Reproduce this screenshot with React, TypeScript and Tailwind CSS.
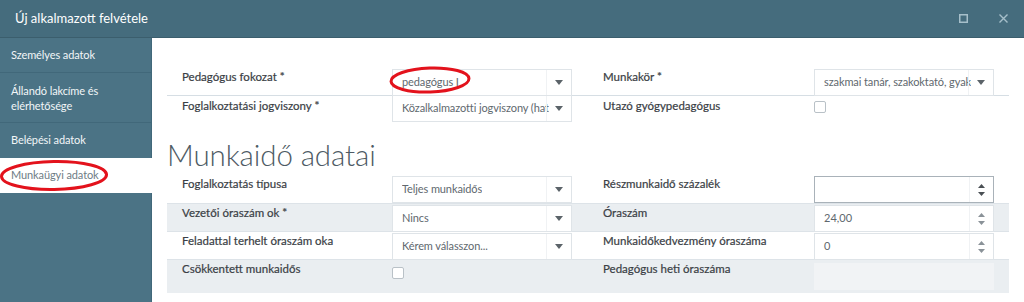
import React from "react";

const Caret = () => (
  <svg width="8" height="5" viewBox="0 0 8 5" className="block">
    <path d="M0 0 L8 0 L4 5 Z" fill="#5b6369" />
  </svg>
);

const Spinner = ({ dark }: { dark?: boolean }) => (
  <div className="flex flex-col items-center gap-[4px]">
    <svg width="7" height="4" viewBox="0 0 7 4" className="block">
      <path d="M0 4 L7 4 L3.5 0 Z" fill={dark ? "#4a4f54" : "#8a9298"} />
    </svg>
    <svg width="7" height="4" viewBox="0 0 7 4" className="block">
      <path d="M0 0 L7 0 L3.5 4 Z" fill={dark ? "#4a4f54" : "#8a9298"} />
    </svg>
  </div>
);

const Select = ({ value, cls = "" }: { value: string; cls?: string }) => (
  <div className={`relative w-[180px] h-[27px] border border-[#dfe4e8] bg-white ${cls}`}>
    <div className="absolute inset-0 pl-[9px] pr-[22px] flex items-center overflow-hidden whitespace-nowrap text-[11px] tracking-[-0.1px] text-[#60686e]">
      <span className="overflow-hidden">{value}</span>
    </div>
    <div className="absolute right-0 top-0 bottom-0 w-[25px] border-l border-[#f0f2f4] flex items-center justify-center">
      <Caret />
    </div>
  </div>
);

const NumInput = ({ value, dark, cls = "" }: { value: string; dark?: boolean; cls?: string }) => (
  <div
    className={`w-[180px] h-[27px] border ${dark ? "border-[#a9b2b9]" : "border-[#dfe4e8]"} bg-white flex items-stretch ${cls}`}
  >
    <div className="flex-1 pl-[9px] flex items-center text-[11px] text-[#60686e]">{value}</div>
    <div className="w-[24px] border-l border-[#f0f2f4] flex items-center justify-center">
      <Spinner dark={dark} />
    </div>
  </div>
);

const Check = () => (
  <div className="w-[12px] h-[12px] border border-[#b9c1c7] rounded-[2px] bg-white" />
);

const Label1 = ({ children }: { children: React.ReactNode }) => (
  <div className="w-[225px] pl-[15px] pt-[1px] text-[11.5px] leading-[14px] font-normal text-[#3a4045] whitespace-nowrap [-webkit-text-stroke:0.2px_#3a4045]">
    {children}
  </div>
);
const Label2 = ({ children }: { children: React.ReactNode }) => (
  <div className="w-[242px] pl-[31px] pt-[1px] text-[11.5px] leading-[14px] font-normal text-[#3a4045] whitespace-nowrap [-webkit-text-stroke:0.2px_#3a4045]">
    {children}
  </div>
);

export default function App() {
  return (
    <div
      className="relative w-[1024px] h-[302px] overflow-hidden bg-white"
      style={{ fontFamily: "Lato, 'Open Sans', sans-serif" }}
    >
      {/* header */}
      <div className="h-[38px] bg-[#456c7d] border-b border-[#3b5e6d] flex items-center pl-[15px] pr-[16px]">
        <div className="text-[13px] text-white">Új alkalmazott felvétele</div>
        <div className="ml-auto flex items-center gap-[31px]">
          <svg width="9" height="9" viewBox="0 0 9 9" className="block">
            <rect x="0.75" y="0.75" width="7.5" height="7.5" fill="none" stroke="#a6bfca" strokeWidth="1.5" />
          </svg>
          <svg width="9" height="9" viewBox="0 0 9 9" className="block">
            <path d="M0.5 0.5 L8.5 8.5 M8.5 0.5 L0.5 8.5" stroke="#a6bfca" strokeWidth="1.4" />
          </svg>
        </div>
      </div>

      <div className="flex h-[264px]">
        {/* sidebar */}
        <div className="w-[152px] bg-[#4b7385] border-r border-[#41687a] flex flex-col text-[11px] tracking-[-0.1px] text-[#f2f6f8]">
          <div className="h-[35px] pl-[11px] flex items-center border-b border-[#41687a]">Személyes adatok</div>
          <div className="h-[50px] pl-[11px] flex items-center border-b border-[#41687a] leading-[15px]">
            Állandó lakcíme és
            <br />
            elérhetősége
          </div>
          <div className="h-[35px] pl-[11px] flex items-center">Belépési adatok</div>
          <div className="h-[35px] pl-[11px] flex items-center bg-white text-[#6e7c85] -mr-px">Munkaügyi adatok</div>
        </div>

        {/* content */}
        <div className="flex-1 pl-[15px] pr-[15px] pt-[31px]">
          <div className="flex h-[27px] border-b border-[#d6dee4]">
            <Label1>Pedagógus fokozat *</Label1>
            <Select value="pedagógus I" />
            <Label2>Munkakör *</Label2>
            <Select value="szakmai tanár, szakoktató, gyakorlati oktató" />
          </div>
          <div className="flex h-[27px]">
            <Label1>
              <div className="pt-[2px]">Foglalkoztatási jogviszony *</div>
            </Label1>
            <Select value="Közalkalmazotti jogviszony (határozatlan idejű)" cls="-mt-px" />
            <Label2>
              <div className="pt-[2px]">Utazó gyógypedagógus</div>
            </Label2>
            <div className="pt-[5px]">
              <Check />
            </div>
          </div>

          <div className="mt-[14px] text-[29.5px] leading-[35px] font-light text-[#4d5a64] tracking-[-0.1px]">
            Munkaidő adatai
          </div>

          <div className="mt-[3px]">
            <div className="flex h-[28px] pt-[1px]">
              <Label1>Foglalkoztatás típusa</Label1>
              <Select value="Teljes munkaidős" />
              <Label2>Részmunkaidő százalék</Label2>
              <NumInput value="" dark />
            </div>
            <div className="flex h-[28px] pt-[1px] bg-[#eaeef1] border-t border-[#dde3e8]">
              <Label1>Vezetői óraszám ok *</Label1>
              <Select value="Nincs" />
              <Label2>Óraszám</Label2>
              <NumInput value="24,00" />
            </div>
            <div className="flex h-[28px] pt-[1px] border-t border-[#dde3e8]">
              <Label1>Feladattal terhelt óraszám oka</Label1>
              <Select value="Kérem válasszon..." />
              <Label2>Munkaidőkedvezmény óraszáma</Label2>
              <NumInput value="0" />
            </div>
            <div className="flex h-[34px] pt-[1px] bg-[#eaeef1] border-t border-[#dde3e8]">
              <Label1>Csökkentett munkaidős</Label1>
              <div className="w-[180px] pt-[6px]">
                <Check />
              </div>
              <Label2>Pedagógus heti óraszáma</Label2>
              <div className="w-[180px] h-[27px] mt-[2px] bg-[#f1f3f5]" />
            </div>
          </div>
        </div>
      </div>

      {/* red annotation ellipses */}
      <svg className="absolute left-0 top-0 pointer-events-none" width="1024" height="302">
        <ellipse cx="430" cy="80" rx="39" ry="12" fill="none" stroke="#e3121c" strokeWidth="3" transform="rotate(-2 430 80)" />
        <ellipse cx="54" cy="175.5" rx="52.5" ry="14" fill="none" stroke="#e3121c" strokeWidth="3" transform="rotate(-1 54 175)" />
      </svg>
    </div>
  );
}
